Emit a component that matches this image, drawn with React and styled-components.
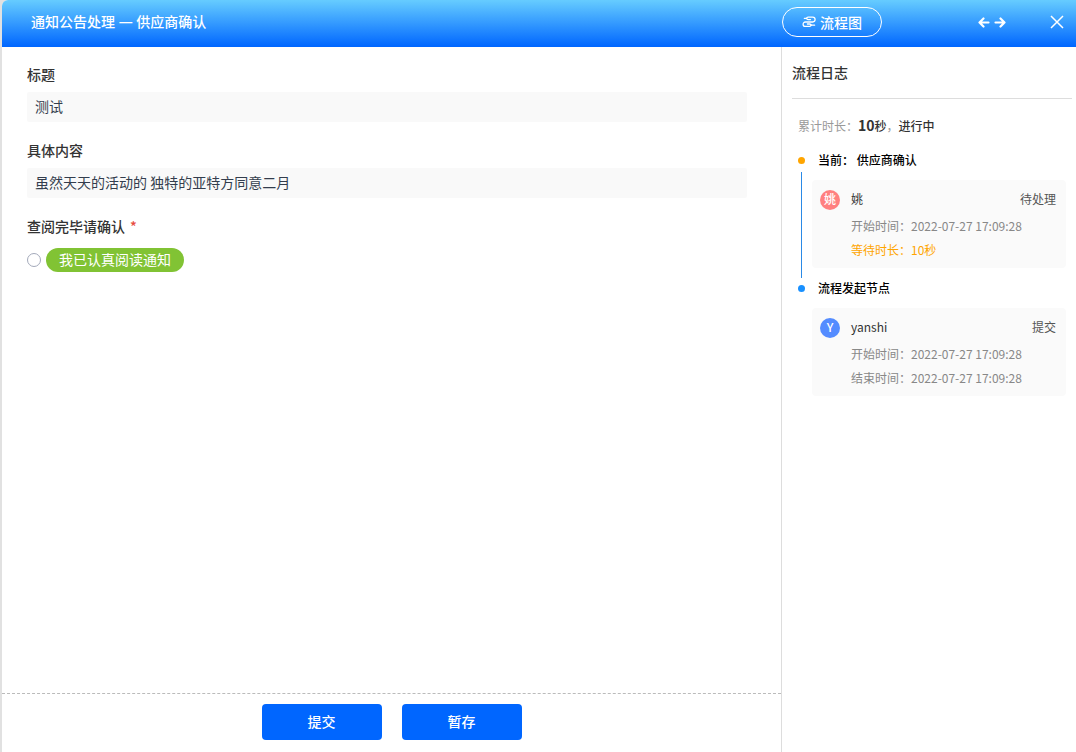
import React from 'react';
import styled, { createGlobalStyle } from 'styled-components';

const GlobalStyle = createGlobalStyle`
  *, *::before, *::after { box-sizing: border-box; }
  body {
    margin: 0;
    background: #e1e1e1;
    font-family: "Noto Sans CJK SC", sans-serif;
    font-size: 14px;
    color: #333;
  }
  h1, h2, h3, p, ol { margin: 0; padding: 0; font-size: inherit; }
  ol { list-style: none; }
  button, input { font: inherit; }
`;

const Dialog = styled.div`
  display: flex;
  flex-direction: column;
  min-height: 100vh;
  margin-left: 2px;
  border-top-left-radius: 6px;
  background: #fff;
  overflow: hidden;
`;

const Header = styled.header`
  display: flex;
  align-items: center;
  height: 47px;
  padding: 0 12px 3px 29px;
  background: linear-gradient(#6cf, #06f);
  color: #fff;
`;

const HeaderTitle = styled.h1`
  flex: 1;
  font-family: "Open Sans", "Noto Sans CJK SC", sans-serif;
  font-weight: 500;
  line-height: 22px;
`;

const HeaderTools = styled.div`
  display: flex;
  align-items: center;
`;

const FlowButton = styled.button`
  display: flex;
  align-items: center;
  justify-content: center;
  gap: 4px;
  width: 100px;
  height: 30px;
  padding: 0;
  border: 1px solid #fff;
  border-radius: 15px;
  background: transparent;
  color: #fff;
  font-weight: 500;
  cursor: pointer;
`;

const IconButton = styled.button`
  display: flex;
  margin-left: ${(p) => p.$gap}px;
  padding: 0;
  border: 0;
  background: transparent;
  color: #fff;
  cursor: pointer;
`;

const Body = styled.div`
  display: flex;
  flex: 1;
`;

const Main = styled.main`
  display: flex;
  flex: 1;
  flex-direction: column;
`;

const Form = styled.form`
  display: flex;
  flex: 1;
  flex-direction: column;
  gap: 17px;
  padding: 16px 34px 16px 25px;
`;

const Field = styled.div`
  display: flex;
  flex-direction: column;
  gap: 7px;
`;

const Label = styled.label`
  font-weight: 500;
  line-height: 22px;
`;

const TextInput = styled.input`
  width: 100%;
  height: 30px;
  padding: 0 8px 2px;
  border: 0;
  border-radius: 2px;
  background: #f9f9f9;
  color: #333d4d;
`;

const Choices = styled.fieldset`
  margin: 0;
  padding: 0;
  border: 0;
`;

const Legend = styled.legend`
  margin-bottom: 11px;
  padding: 0;
  font-weight: 500;
  line-height: 22px;
`;

const Required = styled.span`
  margin-left: 5px;
  color: #e74c3c;
`;

const Choice = styled.label`
  display: flex;
  align-items: center;
  gap: 5px;
  cursor: pointer;
`;

const Radio = styled.input`
  appearance: none;
  width: 14px;
  height: 14px;
  margin: 0;
  border: 1px solid #a3a9ba;
  border-radius: 50%;
  background: #fff;

  &:checked { border: 4px solid #06f; }
`;

const Tag = styled.span`
  padding: 0 13px 2px;
  border-radius: 12px;
  background: #81c334;
  color: #fff;
  line-height: 22px;
`;

const Footer = styled.footer`
  display: flex;
  justify-content: center;
  gap: 20px;
  padding: 10px 0 12px;
  border-top: 1px dashed #bbb;
`;

const ActionButton = styled.button`
  width: 120px;
  height: 36px;
  padding: 0 0 2px;
  border: 0;
  border-radius: 4px;
  background: #06f;
  color: #fff;
  font-weight: 500;
  cursor: pointer;
`;

const Aside = styled.aside`
  width: 295px;
  padding: 0 4px 0 10px;
  border-left: 1px solid #ddd;
  font-size: 12px;
`;

const AsideTitle = styled.h2`
  padding: 14px 0 15px;
  border-bottom: 1px solid #ddd;
  font-size: 14px;
  font-weight: 500;
  line-height: 22px;
`;

const Summary = styled.p`
  padding: 15px 0 0 6px;
  color: #999;
  line-height: 22px;

  strong { color: #333; font-weight: 500; }
  b { font-size: 14px; font-weight: 700; }
`;

const Timeline = styled.ol`
  padding: 13px 6px 0;
`;

const Step = styled.li`
  display: grid;
  grid-template-columns: 7px 1fr;
  column-gap: 7px;
`;

const StepBody = styled.div`
  padding-bottom: 10px;
`;

const Rail = styled.div`
  display: flex;
  flex-direction: column;
  align-items: center;
  gap: 8px;
  padding-top: 7px;
`;

const Dot = styled.span`
  width: 7px;
  height: 7px;
  border-radius: 50%;
  background: ${(p) => p.$color};
`;

const Line = styled.span`
  flex: 1;
  width: 1px;
  background: #2b8ae6;
`;

const StepTitle = styled.h3`
  padding: 0 0 10px 6px;
  color: #000;
  font-weight: 500;
  line-height: 20px;
`;

const Card = styled.div`
  padding: 8px 10px 6px 8px;
  border-radius: 4px;
  background: #fafafa;
`;

const Person = styled.div`
  display: flex;
  align-items: flex-end;
  margin-bottom: 4px;
  line-height: 22px;
`;

const Avatar = styled.span`
  width: 20px;
  height: 20px;
  margin-right: 11px;
  border-radius: 50%;
  background: ${(p) => p.$color};
  color: #fff;
  font-weight: 500;
  line-height: 18px;
  text-align: center;
`;

const Status = styled.span`
  margin-left: auto;
  color: #555;
`;

const Detail = styled.p`
  padding-left: 31px;
  color: ${(p) => (p.$warn ? '#ffa500' : '#888')};
  line-height: 24px;
`;

const FlowIcon = () => (
  <svg width="14" height="14" viewBox="0 0 14 14" fill="none" stroke="currentColor" strokeWidth="1.3" strokeLinecap="round" aria-hidden="true">
    <path d="M4.6 3.4a1.5 1.5 0 0 1 1.5-1.2H10.7a2.4 2.4 0 0 1 0 4.8H3.3a2.2 2.2 0 0 0 0 4.4H7.6a1.5 1.5 0 0 0 1.5-1.2" />
    <path d="M4.6 3.4a1.5 1.5 0 0 0 1.5 1.2H8.5M9.1 10.2a1.5 1.5 0 0 0-1.5-1.2H5.4" />
    <path d="M2.4 3.4H4.4M9.2 10.2H12.6" />
  </svg>
);

const ArrowsIcon = () => (
  <svg width="28" height="12" viewBox="0 0 28 12" fill="none" stroke="currentColor" strokeWidth="2.2" strokeLinecap="round" strokeLinejoin="round" aria-hidden="true">
    <path d="M5.5 2.5 1.5 6.5 5.5 10.5M1.5 6.5H10.5M22.5 2.5 26.5 6.5 22.5 10.5M26.5 6.5H17.5" />
  </svg>
);

const CloseIcon = () => (
  <svg width="14" height="14" viewBox="0 0 14 14" fill="none" stroke="currentColor" strokeWidth="1.5" aria-hidden="true">
    <path d="M1 1 13 13M13 1 1 13" />
  </svg>
);

const steps = [
  {
    title: '当前： 供应商确认',
    dot: '#ffa500',
    avatar: '姚',
    avatarColor: '#ff8080',
    name: '姚',
    status: '待处理',
    details: [{ text: '开始时间：2022-07-27 17:09:28' }, { text: '等待时长：10秒', warn: true }],
  },
  {
    title: '流程发起节点',
    dot: '#1890ff',
    avatar: 'Y',
    avatarColor: '#548cff',
    name: 'yanshi',
    status: '提交',
    details: [{ text: '开始时间：2022-07-27 17:09:28' }, { text: '结束时间：2022-07-27 17:09:28' }],
  },
];

export default function App() {
  return (
    <>
      <GlobalStyle />
      <Dialog>
        <Header>
          <HeaderTitle>通知公告处理 — 供应商确认</HeaderTitle>
          <HeaderTools>
            <FlowButton type="button"><FlowIcon />流程图</FlowButton>
            <IconButton type="button" $gap={96} aria-label="展开"><ArrowsIcon /></IconButton>
            <IconButton type="button" $gap={44} aria-label="关闭"><CloseIcon /></IconButton>
          </HeaderTools>
        </Header>
        <Body>
          <Main>
            <Form id="notice">
              <Field>
                <Label htmlFor="title">标题</Label>
                <TextInput id="title" readOnly value="测试" />
              </Field>
              <Field>
                <Label htmlFor="content">具体内容</Label>
                <TextInput id="content" readOnly value="虽然天天的活动的 独特的亚特方同意二月" />
              </Field>
              <Choices>
                <Legend>查阅完毕请确认<Required>*</Required></Legend>
                <Choice>
                  <Radio type="radio" name="confirm" />
                  <Tag>我已认真阅读通知</Tag>
                </Choice>
              </Choices>
            </Form>
            <Footer>
              <ActionButton type="submit" form="notice">提交</ActionButton>
              <ActionButton type="button">暂存</ActionButton>
            </Footer>
          </Main>
          <Aside>
            <AsideTitle>流程日志</AsideTitle>
            <Summary>累计时长：<strong><b>10</b>秒</strong>，<strong>进行中</strong></Summary>
            <Timeline>
              {steps.map((step, i) => (
                <Step key={step.title}>
                  <Rail>
                    <Dot $color={step.dot} />
                    {i < steps.length - 1 && <Line />}
                  </Rail>
                  <StepBody>
                    <StepTitle>{step.title}</StepTitle>
                    <Card>
                      <Person>
                        <Avatar $color={step.avatarColor}>{step.avatar}</Avatar>
                        {step.name}
                        <Status>{step.status}</Status>
                      </Person>
                      {step.details.map((d) => (
                        <Detail key={d.text} $warn={d.warn}>{d.text}</Detail>
                      ))}
                    </Card>
                  </StepBody>
                </Step>
              ))}
            </Timeline>
          </Aside>
        </Body>
      </Dialog>
    </>
  );
}
